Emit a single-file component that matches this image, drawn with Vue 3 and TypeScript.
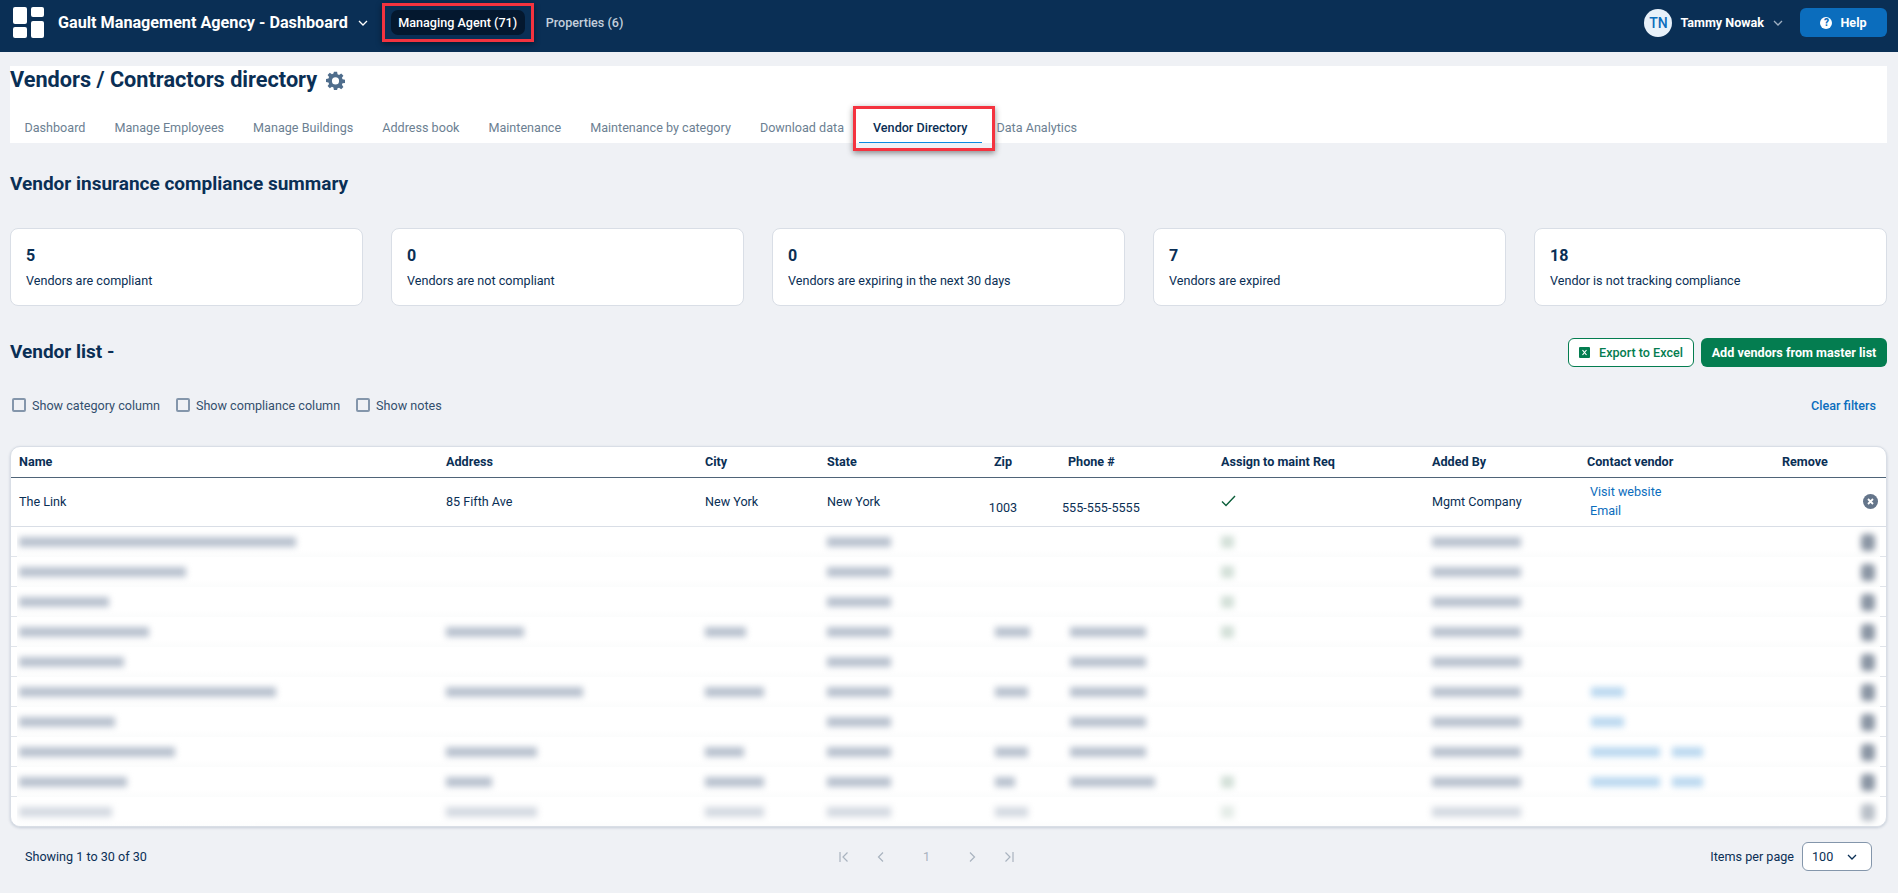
<template>
  <div class="app">
    <header class="topbar">
      <svg class="logo" width="31" height="31" viewBox="0 0 31 31" fill="#fff">
        <rect x="0" y="0" width="14" height="17" rx="2" />
        <rect x="0" y="20" width="14" height="11" rx="2" />
        <rect x="18" y="0" width="13" height="10" rx="2" />
        <rect x="18" y="14" width="13" height="17" rx="2" />
      </svg>
      <span class="agency">Gault Management Agency - Dashboard</span>
      <svg class="chev agency-chev" width="10" height="6" viewBox="0 0 10 6"><path d="M1 1l4 4 4-4" /></svg>
      <nav class="topnav">
        <a class="pill">
          Managing Agent (71)
          <span class="redbox pill-box"></span>
        </a>
        <a class="prop">Properties (6)</a>
      </nav>
      <div class="user">
        <span class="avatar">TN</span>
        <span class="uname">Tammy Nowak</span>
        <svg class="chev user-chev" width="10" height="6" viewBox="0 0 10 6"><path d="M1 1l4 4 4-4" /></svg>
      </div>
      <button class="help">
        <span class="help-mark">?</span>
        Help
      </button>
    </header>

    <main class="page">
      <section class="panel">
        <h1 class="title">
          Vendors / Contractors directory
          <svg class="gear" width="19" height="19" viewBox="0 0 24 24" fill="#4f6d8c">
            <path fill-rule="evenodd" d="M10 1h4l.6 3.2 1.9.8 2.7-1.9 2.8 2.8-1.9 2.7.8 1.9L24 11v4l-3.1.5-.8 1.9 1.9 2.7-2.8 2.8-2.7-1.9-1.9.8L14 24h-4l-.6-3.2-1.9-.8-2.7 1.9L2 19.100l1.900-2.700-.8-1.900L0 14v-4l3.100-.6.800-1.900L2 4.900 4.800 2.100l2.700 1.900 1.900-.8L10 1zm2 7a4.500 4.500 0 1 0 0 9 4.500 4.500 0 0 0 0-9z" />
          </svg>
        </h1>
        <div class="tabs">
          <a v-for="t in tabs" :key="t" class="tab" :class="{ active: t === 'Vendor Directory' }">
            {{ t }}
            <span v-if="t === 'Vendor Directory'" class="redbox tab-box"></span>
          </a>
        </div>
      </section>

      <h2 class="summary-head">Vendor insurance compliance summary</h2>
      <div class="cards">
        <div v-for="c in cards" :key="c.label" class="card">
          <div class="num">{{ c.num }}</div>
          <div class="lbl">{{ c.label }}</div>
        </div>
      </div>

      <div class="list-head">
        <h2>Vendor list -</h2>
        <div class="actions">
          <button class="btn-outline">
            <svg width="11" height="11" viewBox="0 0 11 11">
              <rect width="11" height="11" rx="1" fill="#047d50" />
              <path d="M3.500 3l4 5M7.500 3l-4 5" stroke="#fff" stroke-width="1.200" />
            </svg>
            Export to Excel
          </button>
          <button class="btn-solid">Add vendors from master list</button>
        </div>
      </div>

      <div class="filters">
        <label v-for="f in filters" :key="f" class="check"><span class="box"></span>{{ f }}</label>
        <a class="clear">Clear filters</a>
      </div>

      <div class="table">
        <div class="row head">
          <div>Name</div>
          <div>Address</div>
          <div>City</div>
          <div>State</div>
          <div class="ctr">Zip</div>
          <div class="phone-head">Phone #</div>
          <div class="assign">Assign to maint Req</div>
          <div>Added By</div>
          <div>Contact vendor</div>
          <div>Remove</div>
        </div>
        <div class="row first">
          <div>The Link</div>
          <div>85 Fifth Ave</div>
          <div>New York</div>
          <div>New York</div>
          <div class="ctr low">1003</div>
          <div class="phone-val low">555-555-5555</div>
          <div class="assign">
            <svg class="tick" width="15" height="12" viewBox="0 0 15 12" fill="none">
              <path d="M1 6.500l4 4L14 1" stroke="#0b5e3a" stroke-width="1.400" />
            </svg>
          </div>
          <div>Mgmt Company</div>
          <div class="links"><a>Visit website</a><a>Email</a></div>
          <div class="rm">
            <svg width="15" height="15" viewBox="0 0 15 15">
              <circle cx="7.500" cy="7.500" r="7.500" fill="#64758a" />
              <path d="M5 5l5 5M10 5l-5 5" stroke="#fff" stroke-width="1.800" />
            </svg>
          </div>
        </div>
        <div v-for="(r, i) in hidden" :key="i" class="hidden-row">
          <div class="row blur" :class="{ faded: i === 9 }">
            <div class="cell"><span class="bar" :style="{ width: r.name + 'px' }"></span></div>
            <div class="cell"><span v-if="r.addr" class="bar" :style="{ width: r.addr + 'px' }"></span></div>
            <div class="cell"><span v-if="r.city" class="bar" :style="{ width: r.city + 'px' }"></span></div>
            <div class="cell"><span class="bar" style="width: 64px"></span></div>
            <div class="cell zip"><span v-if="r.zip" class="bar" :style="{ width: r.zip + 'px' }"></span></div>
            <div class="cell phone"><span v-if="r.phone" class="bar" :style="{ width: r.phone + 'px' }"></span></div>
            <div class="cell assign"><span v-if="r.tick" class="bar tickbar"></span></div>
            <div class="cell"><span class="bar" style="width: 89px"></span></div>
            <div class="cell contact">
              <span v-for="(w, j) in r.links" :key="j" class="bar linkbar" :style="{ width: w + 'px' }"></span>
            </div>
            <div class="cell rm"><span class="bar rmbar"></span></div>
          </div>
        </div>
      </div>

      <footer class="foot">
        <span class="showing">Showing 1 to 30 of 30</span>
        <div class="pager">
          <svg width="10" height="12" viewBox="0 0 10 12"><path d="M1 1v10M8.500 1.500L4 6l4.500 4.500" /></svg>
          <svg width="7" height="12" viewBox="0 0 7 12"><path d="M6 1.500L1.500 6 6 10.500" /></svg>
          <span class="pnum">1</span>
          <svg width="7" height="12" viewBox="0 0 7 12"><path d="M1 1.500L5.500 6 1 10.500" /></svg>
          <svg width="10" height="12" viewBox="0 0 10 12"><path d="M9 1v10M1.500 1.500L6 6l-4.500 4.500" /></svg>
        </div>
        <div class="perpage">
          <span>Items per page</span>
          <div class="select">
            100
            <svg class="chev" width="10" height="6" viewBox="0 0 10 6"><path d="M1 1l4 4 4-4" /></svg>
          </div>
        </div>
      </footer>
    </main>
  </div>
</template>

<script setup lang="ts">
interface HiddenRow {
  name: number
  addr?: number
  city?: number
  zip?: number
  phone?: number
  tick?: boolean
  links?: number[]
}

const tabs = [
  'Dashboard',
  'Manage Employees',
  'Manage Buildings',
  'Address book',
  'Maintenance',
  'Maintenance by category',
  'Download data',
  'Vendor Directory',
  'Data Analytics'
]

const cards = [
  { num: 5, label: 'Vendors are compliant' },
  { num: 0, label: 'Vendors are not compliant' },
  { num: 0, label: 'Vendors are expiring in the next 30 days' },
  { num: 7, label: 'Vendors are expired' },
  { num: 18, label: 'Vendor is not tracking compliance' }
]

const filters = ['Show category column', 'Show compliance column', 'Show notes']

// names in the reference are blurred out, only their extents are kept
const hidden: HiddenRow[] = [
  { name: 277, tick: true },
  { name: 167, tick: true },
  { name: 90, tick: true },
  { name: 130, addr: 78, city: 41, zip: 35, phone: 76, tick: true },
  { name: 105, phone: 76 },
  { name: 257, addr: 137, city: 59, zip: 33, phone: 76, links: [33] },
  { name: 96, phone: 76, links: [33] },
  { name: 156, addr: 91, city: 39, zip: 33, phone: 76, links: [69, 31] },
  { name: 108, addr: 46, city: 59, zip: 20, phone: 85, tick: true, links: [69, 31] },
  { name: 93, addr: 91, city: 59, zip: 33, tick: true }
]
</script>

<style scoped>
.app {
  font-family: Roboto, "Liberation Sans", sans-serif;
  color: #0a2f55;
  font-size: 12.6px;
  height: 893px;
  overflow: hidden;
  background: #eff1f5;
}

.topbar {
  height: 52px;
  box-sizing: border-box;
  background: #0a2f55;
  display: flex;
  align-items: center;
  padding: 0 11px 7px 13px;
  color: #fff;
}

.logo {
  flex: none;
}

.agency {
  margin-left: 14px;
  font-size: 16.2px;
  font-weight: 700;
}

.chev {
  fill: none;
  stroke: currentColor;
  stroke-width: 1.3;
}

.agency-chev {
  margin-left: 10px;
}

.topnav {
  display: flex;
  align-items: center;
  margin-left: 23px;
}

.pill {
  position: relative;
  height: 25px;
  line-height: 25px;
  padding: 0 7.5px;
  background: #04182f;
  border-radius: 7px;
  font-weight: 500;
}

.prop {
  margin-left: 21px;
  font-weight: 500;
  color: #c3cfdc;
}

.redbox {
  position: absolute;
  border: 3px solid #f4333f;
  box-shadow: 0 2px 6px rgba(0, 0, 0, 0.45);
  pointer-events: none;
}

.pill-box {
  left: -9px;
  right: -9px;
  top: -7px;
  bottom: -7px;
}

.user {
  margin-left: auto;
  display: flex;
  align-items: center;
}

.avatar {
  width: 28px;
  height: 28px;
  border-radius: 50%;
  background: #e8f1fa;
  color: #0b6dbd;
  font-size: 14px;
  font-weight: 500;
  display: flex;
  align-items: center;
  justify-content: center;
}

.uname {
  margin-left: 8px;
  font-weight: 700;
}

.user-chev {
  margin-left: 9px;
  color: #9fb0c2;
}

.help {
  margin-left: 17px;
  width: 87px;
  height: 29px;
  border: 0;
  border-radius: 6px;
  background: #0b6dbd;
  color: #fff;
  font: 700 12.6px Roboto, sans-serif;
  display: flex;
  align-items: center;
  justify-content: center;
  gap: 8px;
}

.help-mark {
  width: 12px;
  height: 12px;
  border-radius: 50%;
  background: #fff;
  color: #0b6dbd;
  font-size: 10px;
  font-weight: 900;
  line-height: 12px;
  text-align: center;
}

.page {
  padding: 14px 11px 0 10px;
}

.panel {
  background: #fff;
  height: 77px;
  position: relative;
}

.title {
  margin: 0;
  font-size: 21.7px;
  font-weight: 700;
  line-height: 28px;
  display: flex;
  align-items: center;
  gap: 9px;
}

.tabs {
  display: flex;
  margin-top: 21px;
}

.tab {
  position: relative;
  padding: 0 14.5px;
  height: 28px;
  line-height: 26px;
  color: #6c7f92;
}

.tab.active {
  color: #0a2f55;
  font-weight: 500;
}

.tab.active::after {
  content: '';
  position: absolute;
  left: 0;
  right: 0;
  bottom: 0;
  height: 1.5px;
  background: #0a8ae0;
}

.tab-box {
  left: -6px;
  right: -13px;
  top: -9px;
  bottom: -8px;
}

.summary-head {
  margin: 29px 0 0;
  font-size: 19px;
  font-weight: 700;
  line-height: 24px;
}

.cards {
  display: grid;
  grid-template-columns: repeat(5, 1fr);
  gap: 28px;
  margin-top: 32px;
}

.card {
  height: 78px;
  box-sizing: border-box;
  background: #fff;
  border: 1px solid #d9dee6;
  border-radius: 8px;
  padding: 17px 15px;
}

.num {
  font-size: 16px;
  font-weight: 700;
  line-height: 19px;
}

.lbl {
  margin-top: 7px;
  line-height: 18px;
}

.list-head {
  display: flex;
  align-items: center;
  justify-content: space-between;
  margin-top: 32px;
}

.list-head h2 {
  margin: 0 0 2px;
  font-size: 19px;
  font-weight: 700;
  line-height: 26px;
}

.actions {
  display: flex;
  gap: 7px;
}

.btn-outline,
.btn-solid {
  height: 29px;
  border-radius: 6px;
  font: 500 12.6px Roboto, sans-serif;
}

.btn-outline {
  width: 126px;
  background: #fff;
  border: 1px solid #047d50;
  color: #047d50;
  display: flex;
  align-items: center;
  justify-content: center;
  gap: 9px;
  padding: 0;
}

.btn-solid {
  width: 186px;
  background: #047d50;
  border: 0;
  color: #fff;
  font-weight: 700;
  padding: 0;
}

.filters {
  height: 28px;
  margin-top: 24px;
  padding-left: 2px;
  display: flex;
  align-items: center;
  gap: 16px;
}

.check {
  display: flex;
  align-items: center;
  gap: 6px;
  color: #334f6d;
}

.box {
  width: 14px;
  height: 14px;
  box-sizing: border-box;
  border: 2px solid #8496ab;
  border-radius: 2px;
}

.clear {
  margin-left: auto;
  margin-right: 11px;
  color: #0b6dbd;
  font-weight: 500;
}

.table {
  margin-top: 27px;
  height: 381px;
  box-sizing: border-box;
  background: #fff;
  border: 1px solid #d9dee6;
  border-radius: 10px;
  box-shadow: 0 1px 3px rgba(10, 47, 85, 0.18);
  overflow: hidden;
}

.row {
  display: grid;
  grid-template-columns: 427px 259px 122px 141px 70px 112px 282px 155px 195px 1fr;
  padding-left: 8px;
  align-items: center;
}

.ctr {
  text-align: center;
}

.phone-head {
  padding-left: 30px;
}

.phone-val {
  padding-left: 24px;
  white-space: nowrap;
}

.assign {
  padding-left: 71px;
}

.head {
  height: 31px;
  box-sizing: border-box;
  border-bottom: 1px solid #4f6478;
  padding-bottom: 2px;
  font-weight: 700;
}

.first {
  height: 49px;
  box-sizing: border-box;
  border-bottom: 1px solid #d9dee6;
  padding-bottom: 2px;
}

.low {
  padding-top: 12px;
}

.tick {
  display: block;
}

.links {
  display: flex;
  flex-direction: column;
  gap: 3px;
  padding-left: 3px;
  line-height: 16px;
  color: #0b6dbd;
}

.rm {
  display: flex;
  justify-content: flex-end;
  padding-right: 8px;
}

.hidden-row {
  height: 30px;
  box-sizing: border-box;
  border-bottom: 1px solid #e1e5eb;
}

.hidden-row:last-child {
  border-bottom: 0;
}

.blur {
  height: 30px;
  margin: 0 6px;
  padding-left: 2px;
  background: linear-gradient(#fff 75%, #fbfcfc);
  overflow: hidden;
}

.faded {
  opacity: 0.6;
}

.cell {
  display: flex;
  align-items: center;
  height: 30px;
}

.bar {
  flex: none;
  height: 10px;
  background: #b9c2cf;
  filter: blur(3px);
}

.zip {
  padding-left: 27px;
}

.phone {
  padding-left: 32px;
}

.tickbar {
  width: 13px;
  height: 12px;
  background: #d3e0d8;
}

.contact {
  gap: 12px;
  padding-left: 4px;
}

.linkbar {
  background: #bcd9f0;
}

.cell.rm {
  padding-right: 5px;
}

.rmbar {
  width: 14px;
  height: 17px;
  background: #8a95a3;
  border-radius: 4px;
}

.foot {
  display: grid;
  grid-template-columns: 814px auto 1fr;
  align-items: center;
  margin-top: 15px;
  padding: 0 15px 0 15px;
  height: 29px;
}

.pager {
  display: flex;
  align-items: center;
  gap: 28px;
  color: #a9b3bf;
}

.pager svg {
  fill: none;
  stroke: #a9b3bf;
  stroke-width: 1.2;
}

.pnum {
  padding: 0 11px;
}

.perpage {
  justify-self: end;
  display: flex;
  align-items: center;
  gap: 8px;
}

.select {
  width: 70px;
  height: 29px;
  box-sizing: border-box;
  border: 1px solid #8496ab;
  border-radius: 6px;
  background: #fff;
  display: flex;
  align-items: center;
  justify-content: space-between;
  padding: 0 14px 0 9px;
}
</style>

<style>
html,
body {
  margin: 0;
  background: #eff1f5;
}
</style>
